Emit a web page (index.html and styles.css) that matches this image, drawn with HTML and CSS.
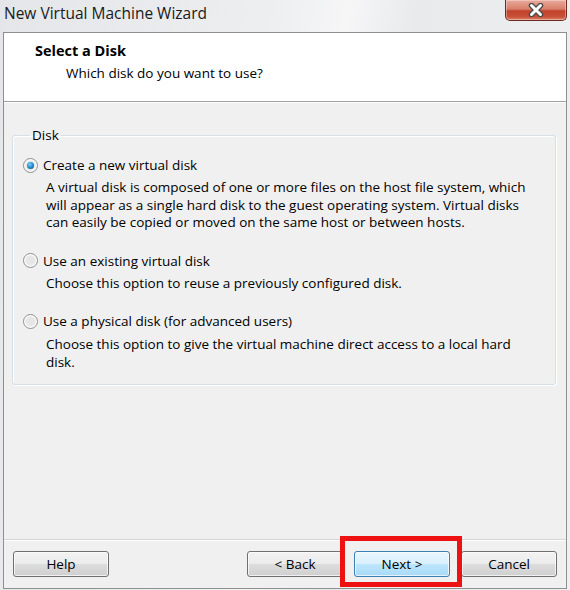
FILE: index.html
```html
<!DOCTYPE html>
<html lang="en">

<head>
    <meta charset="UTF-8">
    <meta name="viewport" content="width=device-width, initial-scale=1.0">
    <title>New Virtual Machine Wizard</title>
    <link rel="stylesheet" href="styles.css">
</head>

<body>

    <div class="window">
        <div class="titlebar">
            <span class="title">New Virtual Machine Wizard</span>
            <button class="close" aria-label="Close">
                <svg width="20" height="14" viewBox="0 0 20 14">
                    <path d="M5.5 2.5 L14.5 11.5 M14.5 2.5 L5.5 11.5" stroke="#4a4a4a" stroke-width="5.5" stroke-linecap="round" />
                    <path d="M5.5 2.5 L14.5 11.5 M14.5 2.5 L5.5 11.5" stroke="#ffffff" stroke-width="3" stroke-linecap="round" />
                </svg>
            </button>
        </div>

        <div class="client">
            <div class="header">
                <h1>Select a Disk</h1>
                <p>Which disk do you want to use?</p>
            </div>

            <div class="content">
                <fieldset class="group">
                    <legend>Disk</legend>

                    <div class="option">
                        <label class="radio-row">
                            <input type="radio" name="disk" checked>
                            <span class="radio"></span>
                            Create a new virtual disk
                        </label>
                        <p class="desc">A virtual disk is composed of one or more files on the host file system, which<br>
                            will appear as a single hard disk to the guest operating system. Virtual disks<br>
                            can easily be copied or moved on the same host or between hosts.</p>
                    </div>

                    <div class="option">
                        <label class="radio-row">
                            <input type="radio" name="disk">
                            <span class="radio"></span>
                            Use an existing virtual disk
                        </label>
                        <p class="desc">Choose this option to reuse a previously configured disk.</p>
                    </div>

                    <div class="option last">
                        <label class="radio-row">
                            <input type="radio" name="disk">
                            <span class="radio"></span>
                            Use a physical disk (for advanced users)
                        </label>
                        <p class="desc">Choose this option to give the virtual machine direct access to a local hard<br>
                            disk.</p>
                    </div>
                </fieldset>
            </div>

            <div class="footer">
                <button class="btn">Help</button>
                <span class="spacer"></span>
                <button class="btn">&lt; Back</button>
                <span class="next-wrap">
                    <button class="btn default">Next &gt;</button>
                    <span class="mark"></span>
                </span>
                <button class="btn">Cancel</button>
            </div>
        </div>
    </div>

</body>

</html>
```

FILE: styles.css
```css
body {
    margin: 0;
    padding: 0;
    font-family: 'Open Sans', 'Liberation Sans', sans-serif;
    font-size: 13.5px;
    color: #000;
    background: #e9ebee;
}

.window {
    width: 570px;
    height: 590px;
    display: flex;
    flex-direction: column;
    background: linear-gradient(100deg, #e4e6e9 0%, #eceef0 40%, #f6f6f7 52%, #e8eaec 62%, #eef0f2 100%);
}

.titlebar {
    height: 32px;
    display: flex;
    justify-content: space-between;
    align-items: flex-start;
    padding: 0 3px 0 4px;
}

.title {
    font-size: 15.5px;
    line-height: 26px;
    color: #1a1a1a;
}

.close {
    width: 62px;
    height: 21px;
    padding: 0;
    border: 1px solid #6e2a20;
    border-top: none;
    border-radius: 0 0 5px 5px;
    background: linear-gradient(#e9a99b 0%, #d9806c 45%, #c2412a 55%, #c8523a 85%, #dc8a70 100%);
    display: flex;
    align-items: center;
    justify-content: center;
    box-shadow: inset 0 0 0 1px rgba(255, 255, 255, 0.35);
}

.client {
    flex: 1;
    margin: 0 3px 1px 3px;
    border: 1px solid #8e8f8f;
    background: #f0f0f0;
    display: flex;
    flex-direction: column;
}

.header {
    height: 69px;
    background: #fff;
    border-bottom: 1px solid #a0a0a0;
    box-shadow: 0 1px 0 #fff;
    padding: 9px 0 0 31px;
    box-sizing: border-box;
}

.header h1 {
    margin: 0;
    font-size: 14.5px;
    font-weight: bold;
    line-height: 18px;
}

.header p {
    margin: 4px 0 0 31px;
    line-height: 18px;
}

.content {
    flex: 1;
    padding: 25px 10px 0 8px;
}

.group {
    margin: 0;
    padding: 12px 10px 0 10px;
    border: 1px solid #d5dfe5;
    border-radius: 3px;
    box-shadow: inset 1px 1px 0 #fff, 1px 1px 0 #fff;
    height: 258px;
    box-sizing: border-box;
}

.group legend {
    padding: 0 2px;
    margin-left: 7px;
    line-height: 16px;
}

.option {
    margin-bottom: 19px;
}

.option.last {
    margin-bottom: 0;
}

.radio-row {
    display: flex;
    align-items: center;
    height: 20px;
}

.radio-row input {
    display: none;
}

.radio {
    width: 13px;
    height: 13px;
    margin-right: 5px;
    border-radius: 50%;
    border: 1px solid #8f8f8f;
    background: radial-gradient(circle at 50% 50%, #e6e6e6 40%, #f8f8f8 75%);
    box-shadow: inset 0 0 0 1px #fff;
    position: relative;
}

.radio-row input:checked + .radio::after {
    content: "";
    position: absolute;
    left: 3px;
    top: 3px;
    width: 7px;
    height: 7px;
    border-radius: 50%;
    background: radial-gradient(circle at 40% 35%, #7fd0ff 0%, #1b86c8 55%, #0d4c78 100%);
}

.desc {
    margin: 4px 0 0 23px;
    line-height: 17.5px;
    white-space: nowrap;
}

.option.last .desc {
    margin-top: 5px;
}

.footer {
    height: 48px;
    border-top: 1px solid #d5d5d5;
    box-shadow: inset 0 1px 0 #fff;
    display: flex;
    align-items: center;
    gap: 11px;
    padding: 0 9px 0 9px;
}

.spacer {
    flex: 1;
}

.btn {
    width: 96px;
    height: 26px;
    padding: 0;
    font-family: 'Open Sans', 'Liberation Sans', sans-serif;
    font-size: 13.5px;
    color: #000;
    border: 1px solid #707070;
    border-radius: 3px;
    background: linear-gradient(#f2f2f2 0%, #ebebeb 50%, #dddddd 51%, #cfcfcf 100%);
    box-shadow: inset 0 0 0 1px rgba(255, 255, 255, 0.7);
}

.btn.default {
    border-color: #3c7fb1;
    background: linear-gradient(#eaf6fd 0%, #d9f0fc 50%, #bee6fd 51%, #a7d9f5 100%);
}

.next-wrap {
    position: relative;
    display: flex;
}

.mark {
    position: absolute;
    left: -14px;
    right: -12px;
    top: -15px;
    bottom: -10px;
    border: 5px solid #ee1111;
    pointer-events: none;
}
```
